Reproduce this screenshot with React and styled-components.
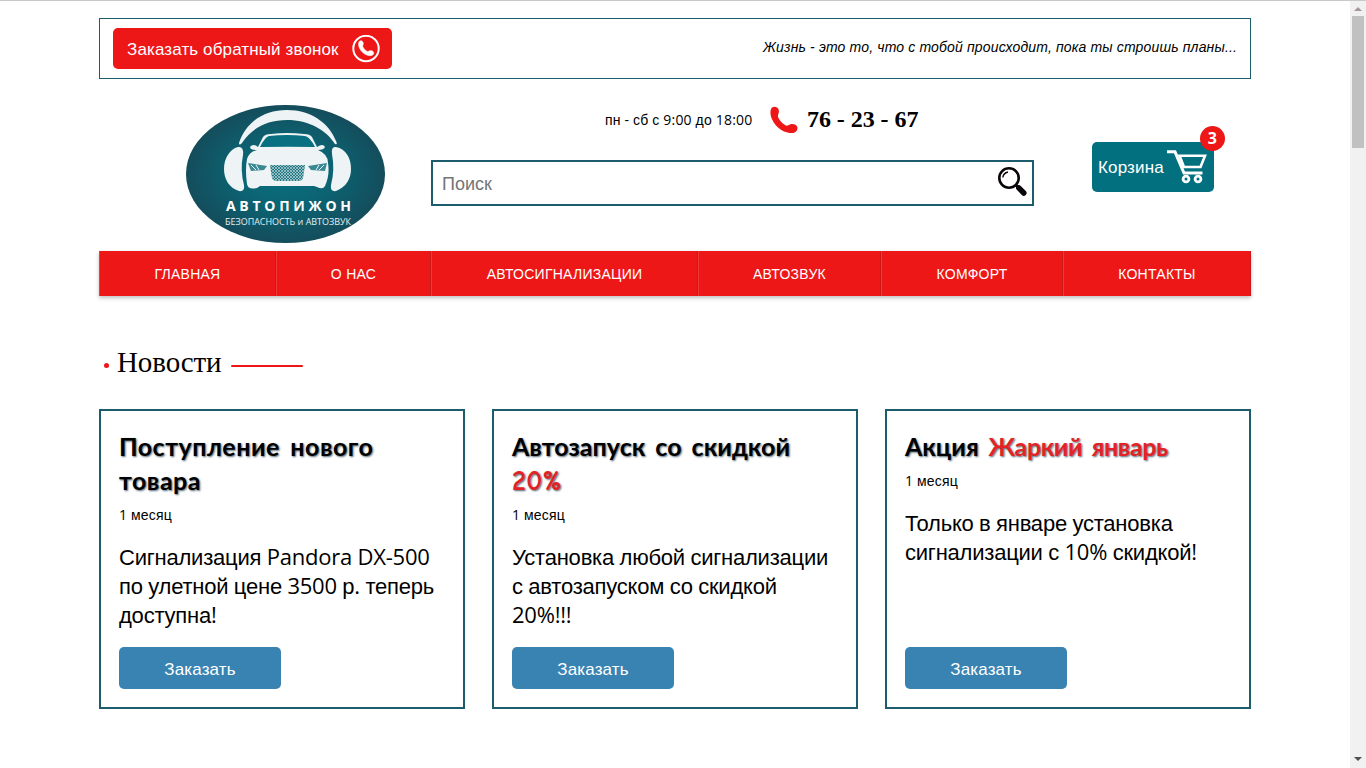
import React from "react";
import styled, { createGlobalStyle } from "styled-components";

const RED = "#ed1717";
const TEAL = "#1c5c6c";

const GlobalStyle = createGlobalStyle`
  *, *::before, *::after { box-sizing: border-box; }
  body { margin: 0; background: #fff; color: #000; font-family: "Liberation Sans", Arial, sans-serif; overflow: hidden; }
  h2, h3, p { margin: 0; font-weight: 400; }
  svg { display: block; flex: none; }
  button { font-family: inherit; cursor: pointer; border: 0; }
`;

const Page = styled.div`
  height: 768px;
  display: flex;
  justify-content: space-between;
  border-top: 1px solid #c9c9c9;
`;
const Container = styled.div`
  width: 1152px;
  margin-left: 99px;
  padding-top: 17px;
`;
const TopBar = styled.div`
  height: 61px;
  border: 1px solid ${TEAL};
  padding: 0 13px;
  display: flex;
  justify-content: space-between;
  align-items: center;
`;
const CallButton = styled.button`
  width: 279px;
  height: 41px;
  padding: 0 12px 0 14px;
  border-radius: 5px;
  background: ${RED};
  color: #fff;
  font-size: 17px;
  line-height: 20px;
  letter-spacing: 0.12px;
  display: flex;
  align-items: center;
  justify-content: space-between;
  white-space: nowrap;
`;
const ButtonLabel = styled.span`
  padding-top: 2px;
`;
const Quote = styled.p`
  font-style: italic;
  font-size: 14px;
  line-height: 20px;
  letter-spacing: 0.15px;
  padding-bottom: 3px;
  white-space: nowrap;
`;
const Header = styled.header`
  height: 172px;
  padding: 26px 26px 0 87px;
  display: flex;
  align-items: flex-start;
`;
const Middle = styled.div`
  width: 603px;
  margin-left: 45px;
`;
const Contacts = styled.div`
  height: 29px;
  padding-left: 174px;
  display: flex;
  align-items: center;
`;
const Hours = styled.span`
  width: 165px;
  font-size: 14px;
  letter-spacing: 0.19px;
  white-space: nowrap;
`;
const Phone = styled.strong`
  margin-left: 9px;
  font: 700 24px/28px "Liberation Serif", "Times New Roman", serif;
  letter-spacing: -0.05px;
  padding-bottom: 1px;
  white-space: nowrap;
`;
const Search = styled.div`
  margin-top: 26px;
  height: 46px;
  border: 2px solid ${TEAL};
  padding: 0 5px 0 9px;
  display: flex;
  align-items: center;
  justify-content: space-between;
  color: #757575;
  font-size: 18px;

  svg {
    margin-bottom: 3px;
  }
`;
const SearchText = styled.span`
  padding-top: 2px;
`;
const Cart = styled.button`
  position: relative;
  width: 122px;
  height: 50px;
  margin: 37px 0 0 58px;
  padding: 0 6px;
  border-radius: 5px;
  background: #037080;
  color: #fff;
  font-size: 17px;
  letter-spacing: 0.15px;
  display: flex;
  align-items: center;
  justify-content: space-between;
`;
const Badge = styled.span`
  position: absolute;
  top: -16px;
  right: -11px;
  width: 25px;
  height: 25px;
  border-radius: 50%;
  background: ${RED};
  font: 700 16px/25px "Open Sans", sans-serif;
  text-align: center;
`;
const Nav = styled.nav`
  height: 45px;
  display: grid;
  grid-template-columns: 177px 155px 267px 183px 182px 188px;
  background: ${RED};
  box-shadow: 0 2px 4px rgba(0, 0, 0, 0.25);
`;
const NavItem = styled.a`
  display: flex;
  align-items: center;
  justify-content: center;
  color: #fff;
  font-size: 14px;
  letter-spacing: 0.25px;
  border-left: 1px solid #ee3a3a;
  border-right: 1px solid #cb1818;
`;
const SectionTitle = styled.h2`
  margin: 49px 0 30px;
  padding-left: 5px;
  height: 34px;
  display: flex;
  align-items: center;
  font: 400 29px/34px "Liberation Serif", "Times New Roman", serif;
  letter-spacing: -0.1px;

  &::before {
    content: "";
    width: 5px;
    height: 5px;
    margin: 7px 8px 0 0;
    border-radius: 50%;
    background: ${RED};
  }
  &::after {
    content: "";
    width: 72px;
    height: 2px;
    margin: 7px 0 0 9px;
    border-radius: 1px;
    background: ${RED};
  }
`;
const Cards = styled.div`
  display: grid;
  grid-template-columns: repeat(3, 366px);
  justify-content: space-between;
`;
const Card = styled.article`
  height: 300px;
  border: 2px solid ${TEAL};
  padding: 20px 18px 18px;
  display: flex;
  flex-direction: column;
`;
const CardTitle = styled.h3`
  font: 700 25px/34px "Comic Sans MS", "Comic Neue", Lato, sans-serif;
  letter-spacing: ${(p) => p.$spacing || "0"};
  word-spacing: 1px;
  white-space: pre-line;
  text-shadow: 1px 1px 2px rgba(20, 50, 70, 0.75);
`;
const Accent = styled.span`
  color: #e32226;
  font-size: ${(p) => p.$size || "25px"};
  line-height: 1;
  letter-spacing: ${(p) => p.$spacing || "0"};
`;
const Age = styled.p`
  height: 28px;
  font-size: 14px;
  line-height: 32px;
  letter-spacing: 0.2px;
`;
const Body = styled.p`
  margin-top: 16px;
  font-size: 22px;
  line-height: 29px;
  letter-spacing: -0.22px;
  white-space: pre;
`;
const Latin = styled.span`
  font-family: "Open Sans", sans-serif;
  line-height: 1;
`;
const OrderButton = styled.button`
  width: 162px;
  height: 42px;
  margin-top: auto;
  padding: 3px 0 0;
  border-radius: 5px;
  background: #3983b3;
  color: #fff;
  font-size: 17px;
  letter-spacing: 0.15px;
`;
const ScrollTrack = styled.div`
  width: 16px;
  background: #f1f1f1;
  display: flex;
  flex-direction: column;
  align-items: center;
`;
const ScrollThumb = styled.div`
  width: 12px;
  height: 132px;
  margin-bottom: auto;
  background: #c1c1c1;
`;

/* Latin letters, digits and signs use Open Sans; Cyrillic stays in the base face. */
const Mixed = ({ children }) =>
  children
    .split(/([^\u0400-\u04ff\n]+)/)
    .map((part, i) => (i % 2 ? <Latin key={i}>{part}</Latin> : part));

const RECEIVER =
  "M1 3C2 .5 5 0 7 1.500C9 3 9.300 5.500 8.500 7.500C8 9 7.500 10 8.500 12C10.300 15.500 13 18 16 19.500C17.500 20.200 18.500 19 20 18.500C23 17.500 26.500 18.500 27.300 21C28 23.500 26.500 26 24 26.700C19 28 12 25.500 7.500 21C2.500 16 -1 8.500 1 3Z";

const CallIcon = () => (
  <svg width="28" height="28" viewBox="0 0 28 28">
    <circle cx="14" cy="13.500" r="12.700" fill="none" stroke="#fff" strokeWidth="2" />
    <path transform="translate(6.300 5.500) scale(.56)" d={RECEIVER} fill="#fff" stroke="#fff" />
  </svg>
);

const SearchIcon = () => (
  <svg width="30" height="31" viewBox="0 0 30 31">
    <circle cx="12" cy="12" r="9.700" fill="none" stroke="#0a0508" strokeWidth="2.600" />
    <path d="M5.800 11.500Q6.500 7 11 6" fill="none" stroke="#0a0508" strokeWidth="1.400" />
    <path d="M19 19L21 21" stroke="#0a0508" strokeWidth="2.500" />
    <path d="M21.800 21.800L26.800 27" stroke="#0a0508" strokeWidth="5.500" strokeLinecap="round" />
  </svg>
);

const CartIcon = () => (
  <svg width="41" height="34" viewBox="0 0 41 34" fill="none" stroke="#fff">
    <path d="M0 1.800H8L17 23H35.500" strokeWidth="3" />
    <path d="M12.500 5.800H38L33.500 17H17Z" strokeWidth="2.600" />
    <circle cx="19" cy="29" r="2.900" strokeWidth="2.800" />
    <circle cx="31" cy="29" r="2.900" strokeWidth="2.800" />
  </svg>
);

const Logo = () => (
  <svg width="200" height="139" viewBox="0 0 200 139">
    <defs>
      <radialGradient id="disc" cx="50%" cy="50%" r="52%">
        <stop offset="0" stopColor="#087080" />
        <stop offset=".5" stopColor="#0c6271" />
        <stop offset="1" stopColor="#154b5a" />
      </radialGradient>
      <pattern id="grille" width="3" height="3" patternUnits="userSpaceOnUse">
        <path d="M0 0L3 3M3 0L0 3" stroke="#cde3e5" strokeWidth=".6" />
      </pattern>
    </defs>
    <ellipse cx="99.500" cy="69" rx="99.500" ry="69" fill="url(#disc)" />
    <g fill="#eef4f5">
      <path d="M53 38C60 17 78 5 101 5C125 5 143 18 150 36Q152 40 149 39C140 25 123 15 101 15C81 15 66 23 56 38Q53 41 53 38Z" />
      <path d="M52 42Q58 41 57 50Q54 65 58 80Q59 87 53 86C43 83 38 74 38 64C38 53 44 44 52 42Z" />
      <path d="M150 42Q145 41 146 49Q149 65 145 80Q144 87 150 86C160 82 165 74 165 64C165 53 160 44 150 42Z" />
      <path d="M64 42Q67 38 72 42L77 32Q79 29 85 29Q101 27 118 29Q124 29 126 32L131 42Q137 38 139 42Q138 45 132 45Q142 49 142 58Q144 70 139 81Q137 85 131 82L128 81H74L71 83Q62 85 61 79Q59 65 61 54Q63 47 71 45Q64 45 64 42Z" />
    </g>
    <path d="M74 42Q79 32 83 31Q101 29 119 31Q124 32 129 42Q101 41.500 74 42Z" fill="#087080" />
    <path d="M84 60H119L117 73Q116 76 112 76H91Q87 76 86 73Z" fill="#267983" />
    <path d="M84 60H119L117 73Q116 76 112 76H91Q87 76 86 73Z" fill="url(#grille)" />
    <path d="M62 58L81 61L78 65L65 66Z M141 58L122 61L125 65L139 66Z" fill="#398893" />
    <path d="M65 60L70 65M70 60L73 65M138 60L133 65M133 60L130 65" stroke="#eef4f5" strokeWidth="1" />
    <text x="40" y="106" textLength="125" fill="#fff" fontFamily="Open Sans, sans-serif" fontWeight="700" fontSize="14">АВТОПИЖОН</text>
    <text x="39" y="120" textLength="126" lengthAdjust="spacingAndGlyphs" fill="#e4eff0" fontFamily="Open Sans, sans-serif" fontSize="9.500">БЕЗОПАСНОСТЬ и АВТОЗВУК</text>
  </svg>
);

const menu = ["ГЛАВНАЯ", "О НАС", "АВТОСИГНАЛИЗАЦИИ", "АВТОЗВУК", "КОМФОРТ", "КОНТАКТЫ"];

const news = [
  {
    title: "Поступление нового\nтовара",
    spacing: "0.5px",
    body: "Сигнализация Pandora DX-500\nпо улетной цене 3500 р. теперь\nдоступна!",
  },
  {
    title: "Автозапуск со скидкой\n",
    spacing: "0.05px",
    accent: "20%",
    accentSize: "28px",
    accentSpacing: "0.3px",
    body: "Установка любой сигнализации\nс автозапуском со скидкой\n20%!!!",
  },
  {
    title: "Акция ",
    accent: "Жаркий январь",
    accentSpacing: "-0.4px",
    body: "Только в январе установка\nсигнализации с 10% скидкой!",
  },
];

export default function App() {
  return (
    <>
      <GlobalStyle />
      <Page>
        <Container>
          <TopBar>
            <CallButton>
              <ButtonLabel>Заказать обратный звонок</ButtonLabel>
              <CallIcon />
            </CallButton>
            <Quote>Жизнь - это то, что с тобой происходит, пока ты строишь планы...</Quote>
          </TopBar>
          <Header>
            <Logo />
            <Middle>
              <Contacts>
                <Hours><Mixed>пн - сб с 9:00 до 18:00</Mixed></Hours>
                <svg width="28" height="28" viewBox="0 0 28 28">
                  <path d={RECEIVER} fill={RED} />
                </svg>
                <Phone>76 - 23 - 67</Phone>
              </Contacts>
              <Search>
                <SearchText>Поиск</SearchText>
                <SearchIcon />
              </Search>
            </Middle>
            <Cart>
              <ButtonLabel>Корзина</ButtonLabel>
              <CartIcon />
              <Badge>3</Badge>
            </Cart>
          </Header>
          <Nav>
            {menu.map((label) => (
              <NavItem key={label}>{label}</NavItem>
            ))}
          </Nav>
          <SectionTitle>Новости</SectionTitle>
          <Cards>
            {news.map((item) => (
              <Card key={item.title}>
                <CardTitle $spacing={item.spacing}>
                  {item.title}
                  {item.accent && (
                    <Accent $size={item.accentSize} $spacing={item.accentSpacing}>
                      {item.accent}
                    </Accent>
                  )}
                </CardTitle>
                <Age><Mixed>1 месяц</Mixed></Age>
                <Body><Mixed>{item.body}</Mixed></Body>
                <OrderButton>Заказать</OrderButton>
              </Card>
            ))}
          </Cards>
        </Container>
        <ScrollTrack>
          <svg width="16" height="15" viewBox="0 0 16 15">
            <path d="M4 10L8 6L12 10Z" fill="#a3969f" />
          </svg>
          <ScrollThumb />
          <svg width="16" height="16" viewBox="0 0 16 16">
            <path d="M4 5L8 9L12 5Z" fill="#505050" />
          </svg>
        </ScrollTrack>
      </Page>
    </>
  );
}
